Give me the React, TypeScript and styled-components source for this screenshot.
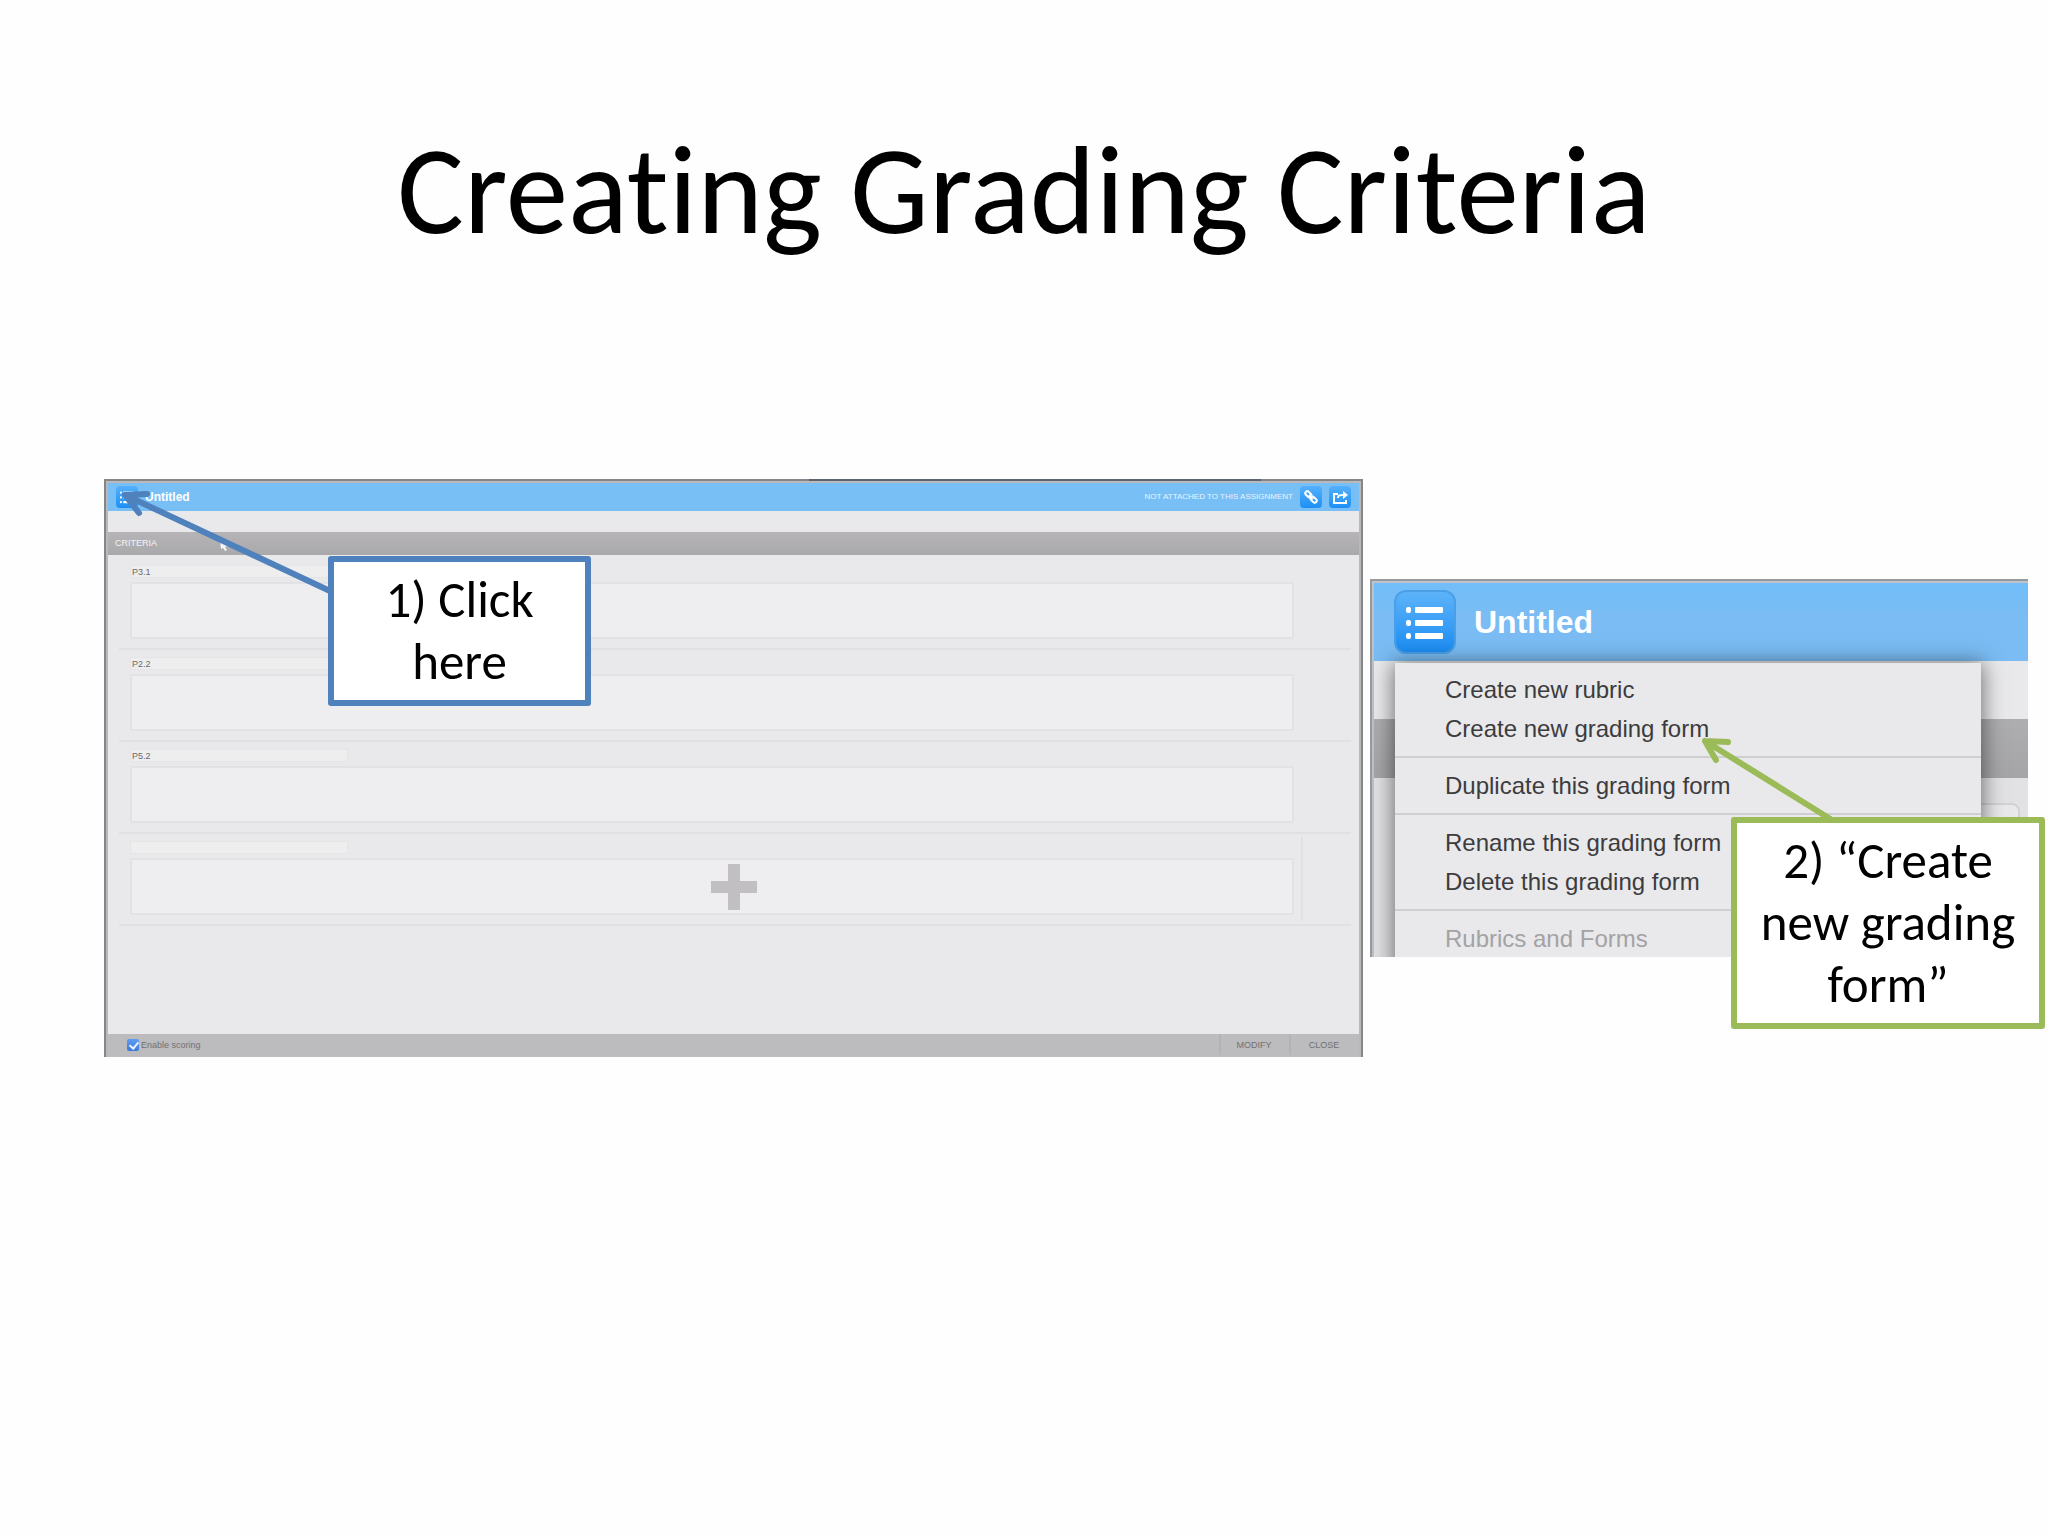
import React from "react";
import styled, { createGlobalStyle } from "styled-components";

const Global = createGlobalStyle`
  * { box-sizing: border-box; }
  body { margin: 0; background: #fefefe; }
  button, input { font: inherit; color: inherit; }
`;

const slideFont = `Carlito, Lato, "Open Sans", sans-serif`;
const uiFont = `"Liberation Sans", Arial, sans-serif`;

const Slide = styled.main`
  min-height: 100vh;
  padding: 0 20px 0 104px;
  overflow-x: hidden;
`;

const Title = styled.h1`
  margin: 0;
  padding: 119px 84px 0 0;
  height: 479px;
  font: 400 125px/144px ${slideFont};
  font-variant-ligatures: none;
  text-align: center;
  color: #000;
`;

const Figures = styled.div`
  display: grid;
  grid-template-columns: 1259fr 658fr;
  column-gap: 7px;
  align-items: start;
`;

const Figure = styled.section`
  position: relative;
  font-family: ${uiFont};
`;

const MenuFigure = styled(Figure)`
  margin-top: 100px;
`;

const FormWindow = styled.div`
  position: relative;
  display: flex;
  flex-direction: column;
  height: 578px;
  border: 2px solid #858688;
  border-bottom: 0;
  padding: 2px 2px 0;
  background: #b9b9bb;
  &::before {
    content: "";
    position: absolute;
    top: -2px;
    left: 56%;
    right: 8%;
    height: 2px;
    background: #5b6470;
  }
`;

const FormHeader = styled.header`
  display: flex;
  align-items: center;
  gap: 7px;
  height: 28px;
  padding: 0 8px;
  background: #78bff6;
  color: #fff;
`;

const FormName = styled.h2`
  flex: 1;
  margin: 0;
  font-size: 12px;
  line-height: 16px;
`;

const Status = styled.span`
  font-size: 8px;
  line-height: 12px;
  color: #e6f4ff;
`;

const IconButton = styled.button`
  display: flex;
  align-items: center;
  justify-content: center;
  width: 22px;
  height: 22px;
  padding: 0;
  border: 0;
  border-radius: 4px;
  background: linear-gradient(#55b0fb, #1e90f5);
  color: #fff;
`;

const Spacer = styled.div`
  height: 21px;
  background: #e9e8ea;
`;

const CriteriaBar = styled.div`
  position: relative;
  height: 23px;
  padding: 0 7px;
  background: linear-gradient(#b6b4b7, #a9a8aa);
  color: #f4f4f4;
  font-size: 9px;
  line-height: 23px;
`;

const Pointer = styled.svg`
  position: absolute;
  top: 8px;
  left: 112px;
`;

const Rows = styled.div`
  flex: 1;
  padding: 3px 8px 0 11px;
  background: #e9e8ea;
`;

const Row = styled.div`
  position: relative;
  display: flex;
  flex-direction: column;
  gap: 4px;
  height: 92px;
  padding: 7px 57px 0 11px;
  border-bottom: 2px solid #e0dfe1;
`;

const NameInput = styled.input`
  width: 218px;
  height: 13px;
  padding: 0 1px;
  border: 1px solid #e5e4e6;
  background: #eeeeef;
  color: #6a6a6c;
  font-size: 9px;
  line-height: 10px;
`;

const DetailInput = styled.textarea`
  height: 57px;
  border: 2px solid #e2e1e4;
  border-radius: 2px;
  background: #eeedef;
  resize: none;
`;

const AddButton = styled.button`
  position: absolute;
  inset: 0;
  display: flex;
  justify-content: center;
  padding: 30px 3px 0 0;
  border: 0;
  background: none;
`;

const RowEdge = styled.span`
  position: absolute;
  top: 3px;
  bottom: 3px;
  right: 48px;
  width: 2px;
  background: #e1e0e2;
`;

const FormFooter = styled.footer`
  display: flex;
  align-items: stretch;
  height: 23px;
  padding: 0 0 2px 19px;
  background: #bcbbbd;
  color: #717173;
  font-size: 9px;
`;

const Scoring = styled.label`
  display: flex;
  flex: 1;
  align-items: center;
  gap: 2px;
`;

const Check = styled.input`
  appearance: none;
  position: relative;
  width: 12px;
  height: 12px;
  margin: 0;
  border-radius: 2px;
  background: linear-gradient(#5e9df0, #3d79dc);
  &:checked::after {
    content: "";
    position: absolute;
    left: 4px;
    top: 1px;
    width: 4px;
    height: 7px;
    border: solid #e4efff;
    border-width: 0 2px 2px 0;
    transform: rotate(40deg);
  }
`;

const FooterButton = styled.button`
  width: 70px;
  padding: 0 2px 0 0;
  border: 0;
  border-left: 2px solid #b3b2b4;
  background: none;
`;

const MenuWindow = styled.div`
  position: relative;
  height: 378px;
  overflow: hidden;
  border-top: 2px solid #98999c;
  border-left: 2px solid #98999c;
  padding: 2px 0 0 2px;
  background: #bdc2c8;
`;

const MenuHeader = styled.header`
  display: flex;
  align-items: center;
  gap: 18px;
  height: 78px;
  padding: 0 20px;
  background: linear-gradient(#71befa, #7abcf3 40%, #7abcf3);
  color: #fff;
`;

const ListButton = styled.button`
  display: flex;
  align-items: center;
  justify-content: center;
  width: 62px;
  height: 64px;
  padding: 0;
  border: 2px solid #4b9fe6;
  border-radius: 12px;
  background: linear-gradient(#5db3fa, #1c8df3);
`;

const MenuName = styled.h2`
  margin: 0;
  font-size: 32px;
  line-height: 36px;
`;

const MenuPage = styled.div`
  height: 296px;
  padding: 2px 47px 0 21px;
  background: linear-gradient(#e9e8ea 58px, #aeadb0 58px, #a5a4a7 117px, #e2e1e4 117px);
`;

const PageField = styled.span`
  position: absolute;
  top: 222px;
  right: 8px;
  width: 80px;
  height: 60px;
  border: 2px solid #d2d1d4;
  border-radius: 8px;
  background: #e9e8ea;
`;

const Menu = styled.ul`
  position: relative;
  margin: 0;
  padding: 7px 0 0;
  height: 310px;
  list-style: none;
  background: #e9e8ea;
  box-shadow: 0 2px 20px 2px rgba(0, 0, 0, 0.5);
`;

const MenuItem = styled.li<{ $divided?: boolean }>`
  ${(p) => p.$divided && `border-top: 2px solid #cfced1; margin-top: 8px; padding-top: 8px;`}
`;

const MenuButton = styled.button<{ $muted?: boolean }>`
  display: block;
  width: 100%;
  height: 39px;
  padding: 0 0 0 50px;
  border: 0;
  background: none;
  text-align: left;
  font-size: 24px;
  line-height: 39px;
  color: ${(p) => (p.$muted ? "#a3a2a5" : "#3c3c3e")};
`;

const Callout = styled.p`
  position: absolute;
  margin: 0;
  background: #fff;
  border-radius: 3px;
  color: #000;
  font: 400 51px/62px ${slideFont};
  text-align: center;
`;

const ClickCallout = styled(Callout)`
  top: 77px;
  left: 224px;
  width: 263px;
  padding: 7px 30px;
  border: 6px solid #4f81bd;
`;

const CreateCallout = styled(Callout)`
  top: 238px;
  right: -17px;
  width: 314px;
  padding: 7px 10px;
  border: 6px solid #9bbb59;
`;

const Arrow = styled.svg`
  position: absolute;
  fill: none;
  stroke-width: 6;
  stroke-linecap: round;
  stroke-linejoin: round;
  pointer-events: none;
`;

const ClickArrow = styled(Arrow)`
  top: 6px;
  left: 8px;
  stroke: #4f81bd;
`;

const CreateArrow = styled(Arrow)`
  top: 154px;
  right: 190px;
  stroke: #9bbb59;
`;

const criteria = ["P3.1", "P2.2", "P5.2"];

const menu = [
  { text: "Create new rubric" },
  { text: "Create new grading form" },
  { text: "Duplicate this grading form", divided: true },
  { text: "Rename this grading form", divided: true },
  { text: "Delete this grading form" },
  { text: "Rubrics and Forms", divided: true, muted: true },
];

function ListIcon({ size }: { size: number }) {
  return (
    <svg width={size} height={size} viewBox="0 0 38 38" fill="#fff">
      {[4, 17, 30].map((y) => (
        <g key={y}>
          <rect x="0" y={y} width="5" height="6" rx="2" />
          <rect x="9" y={y} width="28" height="6" rx="1" />
        </g>
      ))}
    </svg>
  );
}

export default function App() {
  return (
    <Slide>
      <Global />
      <Title>Creating Grading Criteria</Title>
      <Figures>
        <Figure>
          <FormWindow>
            <FormHeader>
              <IconButton aria-label="Forms">
                <ListIcon size={14} />
              </IconButton>
              <FormName>Untitled</FormName>
              <Status>NOT ATTACHED TO THIS ASSIGNMENT</Status>
              <IconButton aria-label="Attach">
                <svg width="14" height="14" viewBox="0 0 14 14" fill="none" stroke="#fff" strokeWidth="2">
                  <rect x="1" y="2" width="7" height="4" rx="2" transform="rotate(45 4 4)" />
                  <rect x="6" y="8" width="7" height="4" rx="2" transform="rotate(45 10 10)" />
                  <path d="M5 5l4 4" />
                </svg>
              </IconButton>
              <IconButton aria-label="Share">
                <svg width="15" height="13" viewBox="0 0 15 13" fill="none" stroke="#fff" strokeWidth="2">
                  <path d="M5 3H1v9h12V9" />
                  <path d="M5 7c0-3 2-3 5-3" />
                  <path d="M10 0l5 4L10 8z" fill="#fff" stroke="none" />
                </svg>
              </IconButton>
            </FormHeader>
            <Spacer />
            <CriteriaBar>
              CRITERIA
              <Pointer width="9" height="11" viewBox="0 0 9 11" fill="#f4f4f4">
                <path d="M0 0L8 6L5 7L7 10L5 11L3 8L1 9Z" />
              </Pointer>
            </CriteriaBar>
            <Rows>
              {criteria.map((name) => (
                <Row key={name}>
                  <NameInput aria-label="Criterion name" defaultValue={name} />
                  <DetailInput aria-label={`${name} description`} />
                </Row>
              ))}
              <Row>
                <NameInput aria-label="New criterion name" />
                <DetailInput aria-label="New criterion description" />
                <RowEdge />
                <AddButton aria-label="Add criterion">
                  <svg width="46" height="46" viewBox="0 0 46 46" fill="#c1bfc2">
                    <path d="M17 0h12v17h17v12H29v17H17V29H0V17h17z" />
                  </svg>
                </AddButton>
              </Row>
            </Rows>
            <FormFooter>
              <Scoring>
                <Check type="checkbox" defaultChecked />
                Enable scoring
              </Scoring>
              <FooterButton>MODIFY</FooterButton>
              <FooterButton>CLOSE</FooterButton>
            </FormFooter>
          </FormWindow>
          <ClickArrow width="220" height="110" viewBox="112 485 220 110">
            <path d="M330 591L125 495M147 494L125 495L139 513" />
          </ClickArrow>
          <ClickCallout>1) Click here</ClickCallout>
        </Figure>
        <MenuFigure>
          <MenuWindow>
            <MenuHeader>
              <ListButton aria-label="Forms menu">
                <ListIcon size={38} />
              </ListButton>
              <MenuName>Untitled</MenuName>
            </MenuHeader>
            <MenuPage>
              <PageField />
              <Menu>
                {menu.map((m) => (
                  <MenuItem key={m.text} $divided={m.divided}>
                    <MenuButton $muted={m.muted}>{m.text}</MenuButton>
                  </MenuItem>
                ))}
              </Menu>
            </MenuPage>
          </MenuWindow>
          <CreateArrow width="144" height="90" viewBox="1694 733 144 90">
            <path d="M1832 820L1705 741M1728 742L1705 741L1716 760" />
          </CreateArrow>
          <CreateCallout>2) “Create new grading form”</CreateCallout>
        </MenuFigure>
      </Figures>
    </Slide>
  );
}
